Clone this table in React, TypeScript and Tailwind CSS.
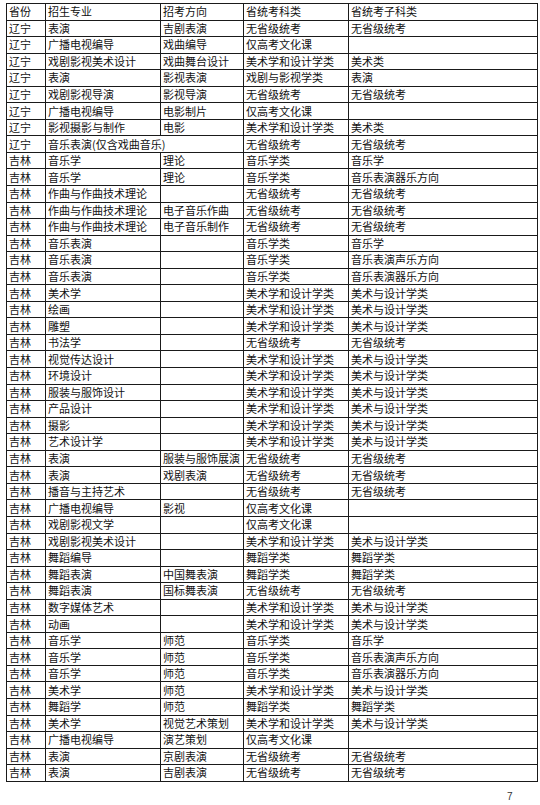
import React from "react"

type Row = [string, string, string, string, string]

const rows: Row[] = [
  ["辽宁", "表演", "吉剧表演", "无省级统考", "无省级统考"],
  ["辽宁", "广播电视编导", "戏曲编导", "仅高考文化课", ""],
  ["辽宁", "戏剧影视美术设计", "戏曲舞台设计", "美术学和设计学类", "美术类"],
  ["辽宁", "表演", "影视表演", "戏剧与影视学类", "表演"],
  ["辽宁", "戏剧影视导演", "影视导演", "无省级统考", "无省级统考"],
  ["辽宁", "广播电视编导", "电影制片", "仅高考文化课", ""],
  ["辽宁", "影视摄影与制作", "电影", "美术学和设计学类", "美术类"],
  ["辽宁", "音乐表演(仅含戏曲音乐)", "__span", "无省级统考", "无省级统考"],
  ["吉林", "音乐学", "理论", "音乐学类", "音乐学"],
  ["吉林", "音乐学", "理论", "音乐学类", "音乐表演器乐方向"],
  ["吉林", "作曲与作曲技术理论", "", "无省级统考", "无省级统考"],
  ["吉林", "作曲与作曲技术理论", "电子音乐作曲", "无省级统考", "无省级统考"],
  ["吉林", "作曲与作曲技术理论", "电子音乐制作", "无省级统考", "无省级统考"],
  ["吉林", "音乐表演", "", "音乐学类", "音乐学"],
  ["吉林", "音乐表演", "", "音乐学类", "音乐表演声乐方向"],
  ["吉林", "音乐表演", "", "音乐学类", "音乐表演器乐方向"],
  ["吉林", "美术学", "", "美术学和设计学类", "美术与设计学类"],
  ["吉林", "绘画", "", "美术学和设计学类", "美术与设计学类"],
  ["吉林", "雕塑", "", "美术学和设计学类", "美术与设计学类"],
  ["吉林", "书法学", "", "无省级统考", "无省级统考"],
  ["吉林", "视觉传达设计", "", "美术学和设计学类", "美术与设计学类"],
  ["吉林", "环境设计", "", "美术学和设计学类", "美术与设计学类"],
  ["吉林", "服装与服饰设计", "", "美术学和设计学类", "美术与设计学类"],
  ["吉林", "产品设计", "", "美术学和设计学类", "美术与设计学类"],
  ["吉林", "摄影", "", "美术学和设计学类", "美术与设计学类"],
  ["吉林", "艺术设计学", "", "美术学和设计学类", "美术与设计学类"],
  ["吉林", "表演", "服装与服饰展演", "无省级统考", "无省级统考"],
  ["吉林", "表演", "戏剧表演", "无省级统考", "无省级统考"],
  ["吉林", "播音与主持艺术", "", "无省级统考", "无省级统考"],
  ["吉林", "广播电视编导", "影视", "仅高考文化课", ""],
  ["吉林", "戏剧影视文学", "", "仅高考文化课", ""],
  ["吉林", "戏剧影视美术设计", "", "美术学和设计学类", "美术与设计学类"],
  ["吉林", "舞蹈编导", "", "舞蹈学类", "舞蹈学类"],
  ["吉林", "舞蹈表演", "中国舞表演", "舞蹈学类", "舞蹈学类"],
  ["吉林", "舞蹈表演", "国标舞表演", "无省级统考", "无省级统考"],
  ["吉林", "数字媒体艺术", "", "美术学和设计学类", "美术与设计学类"],
  ["吉林", "动画", "", "美术学和设计学类", "美术与设计学类"],
  ["吉林", "音乐学", "师范", "音乐学类", "音乐学"],
  ["吉林", "音乐学", "师范", "音乐学类", "音乐表演声乐方向"],
  ["吉林", "音乐学", "师范", "音乐学类", "音乐表演器乐方向"],
  ["吉林", "美术学", "师范", "美术学和设计学类", "美术与设计学类"],
  ["吉林", "舞蹈学", "师范", "舞蹈学类", "舞蹈学类"],
  ["吉林", "美术学", "视觉艺术策划", "美术学和设计学类", "美术与设计学类"],
  ["吉林", "广播电视编导", "演艺策划", "仅高考文化课", ""],
  ["吉林", "表演", "京剧表演", "无省级统考", "无省级统考"],
  ["吉林", "表演", "吉剧表演", "无省级统考", "无省级统考"],
]

const cell = "border border-[#1a1a1a] p-0 pl-[2px] h-[16.55px] leading-none whitespace-nowrap overflow-hidden align-middle"

export default function App() {
  return (
    <div className="w-[540px] h-[805px] bg-white text-[#111] font-['Noto_Sans_CJK_SC','Noto_Sans',sans-serif] text-[11px] relative">
      <div className="pt-[3px] pl-[6px]">
        <table className="table-fixed border-collapse w-[531px]">
          <colgroup>
            <col className="w-[39px]" />
            <col className="w-[115px]" />
            <col className="w-[83px]" />
            <col className="w-[105px]" />
            <col className="w-[189px]" />
          </colgroup>
          <thead>
            <tr>
              {["省份", "招生专业", "招考方向", "省统考科类", "省统考子科类"].map((h) => (
                <td key={h} className={cell + " font-normal"}>{h}</td>
              ))}
            </tr>
          </thead>
          <tbody>
            {rows.map((r, i) => (
              <tr key={i}>
                <td className={cell}>{r[0]}</td>
                {r[2] === "__span" ? (
                  <td className={cell} colSpan={2}>{r[1]}</td>
                ) : (
                  <>
                    <td className={cell}>{r[1]}</td>
                    <td className={cell}>{r[2]}</td>
                  </>
                )}
                <td className={cell}>{r[3]}</td>
                <td className={cell}>{r[4]}</td>
              </tr>
            ))}
          </tbody>
        </table>
      </div>
      <div className="absolute left-[507px] top-[789px] text-[10px] text-[#333] font-['Liberation_Sans',sans-serif]">7</div>
    </div>
  )
}
